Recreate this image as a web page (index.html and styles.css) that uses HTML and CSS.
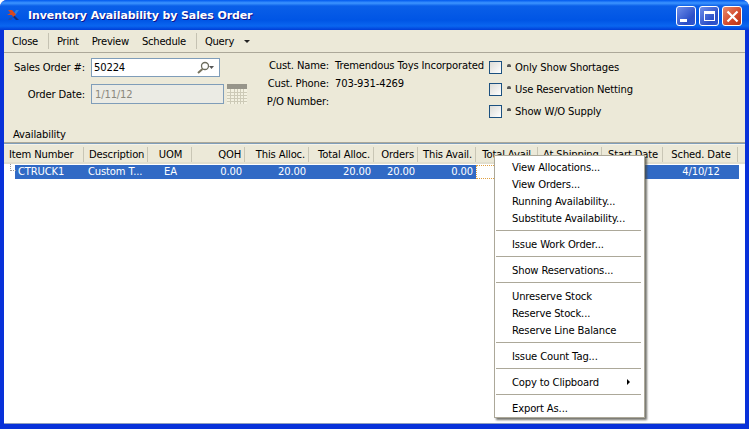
FILE: index.html
```html
<!DOCTYPE html>
<html lang="en">
<head>
    <meta charset="UTF-8">
    <meta name="viewport" content="width=device-width, initial-scale=1.0">
    <title>Inventory Availability by Sales Order</title>
    <link rel="stylesheet" href="styles.css">
</head>
<body>
    <div class="window">
        <!-- Title bar -->
        <div class="titlebar">
            <svg class="app-icon" width="14" height="12" viewBox="0 0 14 12">
                <path d="M12 1h-3L6.500 5 8 6.500z" fill="#2f7fe0"/>
                <path d="M7 6l-1.500 1.500L9 11h3z" fill="#12307c"/>
                <path d="M1 1h4l4 4.500L6 8 5 6H0l3.500-2z" fill="#d8481c"/>
                <path d="M3 8.500h3L4 11H1z" fill="#1f4fa8"/>
            </svg>
            <span class="title-text">Inventory Availability by Sales Order</span>
            <div class="win-buttons">
                <div class="win-btn"><span class="min-bar"></span></div>
                <div class="win-btn"><span class="max-box"></span></div>
                <div class="win-btn close">
                    <svg width="13" height="13" viewBox="0 0 13 13"><path d="M1.500 1.500l10 10M11.500 1.500l-10 10" stroke="#fff" stroke-width="2.200"/></svg>
                </div>
            </div>
        </div>

        <div class="client">
            <!-- Toolbar -->
            <div class="toolbar">
                <span class="tool tool-close">Close</span>
                <span class="tool-sep"></span>
                <span class="tool">Print</span>
                <span class="tool">Preview</span>
                <span class="tool">Schedule</span>
                <span class="tool-sep"></span>
                <span class="tool">Query</span>
                <span class="tool-arrow"></span>
            </div>

            <!-- Search form -->
            <div class="form-area">
                <div class="form-top">
                    <div class="order-fields">
                        <div class="field-row">
                            <label class="field-label">Sales Order #:</label>
                            <div class="order-input">
                                <span>50224</span>
                                <svg width="17" height="13" viewBox="0 0 17 13">
                                    <circle cx="8" cy="5" r="3.500" fill="none" stroke="#6b6b5c" stroke-width="1.300"/>
                                    <path d="M5.500 8L1 12" stroke="#77735e" stroke-width="2"/>
                                    <path d="M12 5h5l-2.500 3z" fill="#555"/>
                                </svg>
                            </div>
                        </div>
                        <div class="field-row date-row">
                            <label class="field-label">Order Date:</label>
                            <div class="date-input">1/11/12</div>
                            <svg class="calendar" width="20" height="20" viewBox="0 0 20 20">
                                <rect width="20" height="20" fill="#f3f1e1"/>
                                <rect width="20" height="5" fill="#97958a"/>
                                <path d="M0 8.500h20M0 11.500h20M0 14.500h20M0 17.500h20M3.500 5v15M7.500 5v15M10.500 5v15M13.500 5v15M16.500 5v15" stroke="#cdcab7" stroke-width="1"/>
                            </svg>
                        </div>
                    </div>

                    <div class="cust-info">
                        <div class="cust-row"><span class="cust-label">Cust. Name:</span><span>Tremendous Toys Incorporated</span></div>
                        <div class="cust-row"><span class="cust-label">Cust. Phone:</span><span>703-931-4269</span></div>
                        <div class="cust-row"><span class="cust-label">P/O Number:</span></div>
                    </div>

                    <div class="options">
                        <div class="option"><span class="check"></span><span class="dot"></span>Only Show Shortages</div>
                        <div class="option"><span class="check"></span><span class="dot"></span>Use Reservation Netting</div>
                        <div class="option"><span class="check"></span><span class="dot"></span>Show W/O Supply</div>
                    </div>
                </div>
                <div class="section-label">Availability</div>
            </div>

            <!-- Availability list -->
            <div class="list">
                <div class="list-header list-grid">
                    <div class="col">Item Number</div>
                    <div class="col">Description</div>
                    <div class="col center">UOM</div>
                    <div class="col right">QOH</div>
                    <div class="col right">This Alloc.</div>
                    <div class="col right">Total Alloc.</div>
                    <div class="col right">Orders</div>
                    <div class="col right">This Avail.</div>
                    <div class="col right">Total Avail.</div>
                    <div class="col right">At Shipping</div>
                    <div class="col center">Start Date</div>
                    <div class="col center">Sched. Date</div>
                </div>
                <div class="list-row list-grid">
                    <div class="cell first">CTRUCK1</div>
                    <div class="cell">Custom T...</div>
                    <div class="cell center">EA</div>
                    <div class="cell right">0.00</div>
                    <div class="cell right">20.00</div>
                    <div class="cell right">20.00</div>
                    <div class="cell right">20.00</div>
                    <div class="cell right">0.00</div>
                    <div class="cell focus"></div>
                    <div class="cell"></div>
                    <div class="cell"></div>
                    <div class="cell center">4/10/12</div>
                </div>
                <span class="tree-dots"></span>
            </div>
        </div>

        <!-- Context menu -->
        <div class="menu">
            <div class="menu-item">View Allocations...</div>
            <div class="menu-item">View Orders...</div>
            <div class="menu-item">Running Availability...</div>
            <div class="menu-item">Substitute Availability...</div>
            <div class="menu-sep"></div>
            <div class="menu-item">Issue Work Order...</div>
            <div class="menu-sep"></div>
            <div class="menu-item">Show Reservations...</div>
            <div class="menu-sep"></div>
            <div class="menu-item">Unreserve Stock</div>
            <div class="menu-item">Reserve Stock...</div>
            <div class="menu-item">Reserve Line Balance</div>
            <div class="menu-sep"></div>
            <div class="menu-item">Issue Count Tag...</div>
            <div class="menu-sep"></div>
            <div class="menu-item has-sub">Copy to Clipboard</div>
            <div class="menu-sep"></div>
            <div class="menu-item">Export As...</div>
        </div>
    </div>
</body>
</html>
```

FILE: styles.css
```css
body {
    margin: 0;
    font-family: "DejaVu Sans", sans-serif;
    font-size: 10px;
    letter-spacing: -0.15px;
    color: #000;
    overflow: hidden;
}
.window {
    position: relative;
    width: 749px;
    height: 429px;
    display: flex;
    flex-direction: column;
    box-sizing: border-box;
    background: #0831d9;
    border-radius: 7px 7px 0 0;
    overflow: hidden;
}
.titlebar {
    height: 30px;
    flex-shrink: 0;
    display: flex;
    align-items: center;
    padding: 0 7px 0 7px;
    background: linear-gradient(to bottom, #0058ee 0, #3d95ff 3px, #0a5fe8 6px, #0055e5 20px, #0a66f0 26px, #003dd7 30px);
}
.app-icon {
    margin-right: 7px;
}
.title-text {
    color: #fff;
    font-size: 11px;
    font-weight: bold;
    letter-spacing: -0.1px;
    text-shadow: 1px 1px 0 #0f1089;
}
.win-buttons {
    margin-left: auto;
    display: flex;
    gap: 3px;
    margin-top: 2px;
}
.win-btn {
    position: relative;
    width: 18px;
    height: 18px;
    border: 1px solid #fff;
    border-radius: 3px;
    background: linear-gradient(135deg, #6f8fea, #2a4ec8 70%, #3058d0);
    display: flex;
    align-items: center;
    justify-content: center;
}
.win-btn.close {
    background: linear-gradient(135deg, #e88a6c, #d2472a 60%, #b93415);
}
.min-bar {
    width: 7px;
    height: 3px;
    background: #fff;
    margin: 8px 5px 0 0;
}
.max-box {
    width: 9px;
    height: 6px;
    border: 1px solid #fff;
    border-top-width: 3px;
}
.client {
    flex: 1;
    display: flex;
    flex-direction: column;
    margin: 0 4px 5px 4px;
    background: #fff;
    border-bottom: 1px solid #8f9fc0;
    min-height: 0;
}
.toolbar {
    height: 22px;
    flex-shrink: 0;
    display: flex;
    align-items: center;
    letter-spacing: -0.25px;
    background: #ece9d8;
    border-bottom: 1px solid #aca899;
}
.tool {
    margin-right: 13px;
}
.tool-close {
    margin-left: 8px;
}
.tool-sep {
    width: 1px;
    height: 16px;
    background: #c5c2b2;
    margin: 0 8px 0 -3px;
}
.tool-arrow {
    width: 0;
    height: 0;
    border: 3px solid transparent;
    border-top: 3px solid #222;
    border-bottom: 0;
    margin-left: -3px;
}
.form-area {
    height: 90px;
    flex-shrink: 0;
    box-sizing: border-box;
    display: flex;
    flex-direction: column;
    background: #ece9d8;
    border-bottom: 1px solid #aca899;
}
.form-top {
    display: flex;
    padding-top: 5px;
}
.order-fields {
    width: 243px;
    flex-shrink: 0;
}
.field-row {
    display: flex;
    align-items: center;
}
.date-row {
    margin-top: 7px;
}
.field-label {
    width: 81px;
    text-align: right;
    margin-right: 6px;
    flex-shrink: 0;
}
.order-input {
    width: 129px;
    height: 19px;
    box-sizing: border-box;
    display: flex;
    align-items: center;
    justify-content: space-between;
    padding: 0 5px 0 2px;
    background: #fff;
    border: 1px solid #7f9db9;
}
.date-input {
    width: 133px;
    height: 20px;
    box-sizing: border-box;
    display: flex;
    align-items: center;
    padding-left: 3px;
    color: #8a887c;
    background: #ebebe4;
    border: 1px solid #7f9db9;
}
.calendar {
    margin-left: 3px;
}
.cust-info {
    width: 242px;
    flex-shrink: 0;
    display: flex;
    flex-direction: column;
    gap: 4px;
}
.cust-row {
    display: flex;
    height: 14px;
    align-items: center;
    white-space: nowrap;
}
.cust-label {
    width: 82px;
    text-align: right;
    margin-right: 6px;
    flex-shrink: 0;
}
.options {
    display: flex;
    flex-direction: column;
    gap: 9px;
    padding-top: 3px;
}
.option {
    display: flex;
    align-items: center;
    height: 13px;
    white-space: nowrap;
}
.check {
    width: 13px;
    height: 13px;
    box-sizing: border-box;
    border: 1px solid #1c5180;
    background: linear-gradient(135deg, #dcdcd7, #fff);
    margin-right: 5px;
}
.dot {
    width: 4px;
    height: 3px;
    background: #555;
    border-radius: 2px 2px 0 0;
    margin: 0 4px 4px 0;
}
.section-label {
    margin-top: auto;
    padding: 0 0 2px 9px;
}
.list {
    position: relative;
    flex: 1;
    background: #fff;
    border-top: 1px solid #7f9db9;
}
.list-grid {
    display: grid;
    grid-template-columns: 80px 64px 44px 53px 64px 65px 44px 58px 62px 64px 61px 75px;
}
.list-header {
    height: 20px;
    background: #ece9d8;
    border-top: 1px solid #f5f3ea;
    box-sizing: border-box;
    padding-top: 2px;
    box-shadow: inset 0 -2px 0 #e2dfcf;
}
.col {
    height: 15px;
    line-height: 15px;
    padding: 0 3px 0 5px;
    border-right: 1px solid #c9c6b5;
    white-space: nowrap;
    overflow: hidden;
    box-sizing: border-box;
}
.list-row {
    height: 14px;
    margin-top: 1px;
    color: #fff;
    background: linear-gradient(to right, #fff 11px, #316ac5 11px);
    width: 735px;
}
.cell {
    line-height: 14px;
    padding: 0 3px 0 4px;
    white-space: nowrap;
    overflow: hidden;
    box-sizing: border-box;
}
.cell.first {
    padding-left: 14px;
}
.cell.focus {
    border: 1px dotted #e0a040;
    background: #fff;
}
.center {
    text-align: center;
}
.right {
    text-align: right;
}
.tree-dots {
    position: absolute;
    left: 6px;
    top: 20px;
    width: 5px;
    height: 6px;
    border-left: 1px dotted #999;
    border-bottom: 1px dotted #999;
}
.menu {
    position: absolute;
    left: 494px;
    top: 155px;
    width: 151px;
    height: 263px;
    box-sizing: border-box;
    padding: 3px 1px 1px 1px;
    background: #fff;
    border: 1px solid #aca899;
    box-shadow: 2px 2px 2px rgba(70, 70, 60, 0.75);
}
.menu-item {
    position: relative;
    height: 17px;
    line-height: 17px;
    padding-left: 16px;
    white-space: nowrap;
}
.menu-item.has-sub::after {
    content: "";
    position: absolute;
    right: 13px;
    top: 5px;
    border: 3px solid transparent;
    border-left: 3px solid #000;
    border-right: 0;
}
.menu-sep {
    height: 1px;
    margin: 3px 2px 5px 0;
    background: #aca899;
}
```
